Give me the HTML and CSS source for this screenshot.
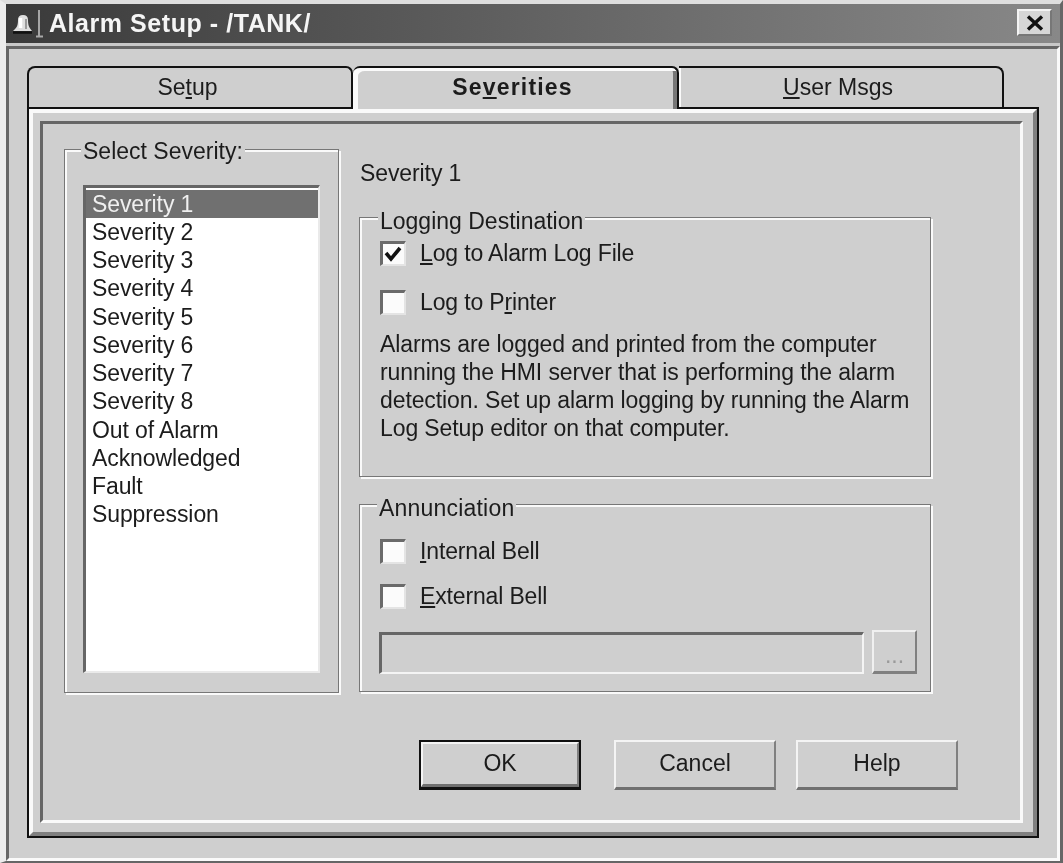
FILE: index.html
```html
<!DOCTYPE html>
<html lang="en">
<head>
<meta charset="utf-8">
<title>Alarm Setup - /TANK/</title>
<link rel="stylesheet" href="styles.css">
</head>
<body>
<div class="window">
  <header class="titlebar">
    <svg class="bell" viewBox="0 0 36 32" width="36" height="32" aria-hidden="true">
      <path d="M2 24 C5 21 7 20 7 13 Q7 8 12 8 Q17 8 17 13 C17 20 19 21 21 24 Z" fill="#dedede"/>
      <path d="M9.500 11 V21" stroke="#ffffff" stroke-width="3.500"/>
      <path d="M15 12 V22" stroke="#9a9a9a" stroke-width="2"/>
      <path d="M2 25.500 H21" stroke="#111" stroke-width="2.500"/>
      <path d="M28 3 V29" stroke="#c8c8c8" stroke-width="1.500"/>
      <path d="M25 29.500 H32" stroke="#a8a8a8" stroke-width="2"/>
    </svg>
    <span class="title-text">Alarm Setup - /TANK/</span>
    <span class="close-btn">
      <svg viewBox="0 0 18 16" width="18" height="16" aria-hidden="true">
        <path d="M2 1.500 L16 14.500 M16 1.500 L2 14.500" stroke="#111" stroke-width="3.400" fill="none"/>
      </svg>
    </span>
  </header>
  <div class="client">
    <nav class="tabs">
      <div class="tab tab-first">Se<u>t</u>up</div>
      <div class="tab tab-active">Se<u>v</u>erities</div>
      <div class="tab tab-last"><u>U</u>ser Msgs</div>
    </nav>
    <div class="page">
      <div class="page-bevel">
        <div class="frame">
          <div class="columns">
            <section class="group group-select">
              <div class="legend legend-high">Select Severity:</div>
              <ul class="listbox">
                <li class="selected">Severity 1</li>
                <li>Severity 2</li>
                <li>Severity 3</li>
                <li>Severity 4</li>
                <li>Severity 5</li>
                <li>Severity 6</li>
                <li>Severity 7</li>
                <li>Severity 8</li>
                <li>Out of Alarm</li>
                <li>Acknowledged</li>
                <li>Fault</li>
                <li>Suppression</li>
              </ul>
            </section>
            <div class="detail">
              <div class="detail-heading">Severity 1</div>
              <section class="group group-logging">
                <div class="legend">Logging Destination</div>
                <div class="check-row row-log-file">
                  <span class="checkbox">
                    <svg viewBox="0 0 21 20" width="21" height="20" aria-hidden="true">
                      <path d="M3 9 L8 15 L17 4" stroke="#111" stroke-width="3.600" fill="none"/>
                    </svg>
                  </span>
                  <span><u>L</u>og to Alarm Log File</span>
                </div>
                <div class="check-row row-printer">
                  <span class="checkbox"></span>
                  <span>Log to P<u>r</u>inter</span>
                </div>
                <p class="note">Alarms are logged and printed from the computer running the HMI server that is performing the alarm detection. Set up alarm logging by running the Alarm Log Setup editor on that computer.</p>
              </section>
              <section class="group group-annunciation">
                <div class="legend legend-annunciation">Annunciation</div>
                <div class="check-row row-internal">
                  <span class="checkbox"></span>
                  <span><u>I</u>nternal Bell</span>
                </div>
                <div class="check-row row-external">
                  <span class="checkbox"></span>
                  <span><u>E</u>xternal Bell</span>
                </div>
                <div class="file-row">
                  <div class="file-field"></div>
                  <div class="browse-btn">...</div>
                </div>
              </section>
            </div>
          </div>
          <div class="actions">
            <div class="btn btn-default"><span class="btn-face">OK</span></div>
            <div class="btn btn-cancel"><span class="btn-face">Cancel</span></div>
            <div class="btn btn-help"><span class="btn-face">Help</span></div>
          </div>
        </div>
      </div>
    </div>
  </div>
</div>
</body>
</html>
```

FILE: styles.css
```css
* { box-sizing: border-box; }
html, body { margin: 0; padding: 0; background: #cfcfcf; }
body {
  width: 1063px;
  height: 863px;
  overflow: hidden;
  font-family: "Liberation Sans", Arial, sans-serif;
  font-size: 23px;
  color: #1c1c1c;
}
u { text-underline-offset: 2px; text-decoration-thickness: 2px; }

.window {
  width: 1063px;
  height: 863px;
  display: flex;
  flex-direction: column;
  background: #cfcfcf;
  border-top: 4px solid #dedede;
  border-left: 6px solid #ececec;
  border-right: 3px solid #666;
  border-bottom: 2px solid #666;
  filter: blur(0.45px);
}

.titlebar {
  height: 42px;
  flex: none;
  display: flex;
  align-items: center;
  padding-left: 5px;
  padding-right: 2px;
  color: #f5f5f5;
  background: linear-gradient(to right, #3a3a3a 0%, #5a5a5a 40%, #727272 70%, #888 100%);
  border-bottom: 3px solid #c8c8c8;
}
.bell { flex: none; margin-top: -1px; }
.title-text {
  margin-left: 2px;
  font-weight: 700;
  font-size: 25px;
  letter-spacing: 0.55px;
}
.close-btn {
  margin-left: auto;
  width: 35px;
  height: 27px;
  margin-top: -2px;
  margin-right: 6px;
  display: flex;
  align-items: center;
  justify-content: center;
  background: #d6d6d6;
  border-top: 2px solid #f4f4f4;
  border-left: 2px solid #f4f4f4;
  border-right: 2px solid #777;
  border-bottom: 2px solid #777;
}

.client {
  flex: 1;
  min-height: 0;
  display: flex;
  flex-direction: column;
  border-top: 3px solid #666;
  border-left: 3px solid #666;
  border-right: 3px solid #fafafa;
  border-bottom: 3px solid #fafafa;
  padding: 17px 18px 20px 18px;
}

.tabs {
  display: flex;
  align-items: flex-start;
  flex: none;
  height: 41px;
}
.tab {
  height: 41px;
  display: flex;
  align-items: center;
  justify-content: center;
  border-top: 2px solid #111;
}
.tab-first {
  width: 326px;
  padding-right: 5px;
  border-left: 2px solid #111;
  border-right: 2px solid #111;
  border-radius: 8px 7px 0 0;
}
.tab-active {
  position: relative;
  z-index: 2;
  width: 326px;
  height: 43px;
  padding: 0 5px 2px 0;
  font-weight: 700;
  letter-spacing: 1.2px;
  border-right: 2px solid #111;
  border-radius: 7px 7px 0 0;
  background: #cfcfcf;
  box-shadow: inset 5px 3px 0 #fafafa, inset -4px 0 0 #777;
}
.tab-last {
  width: 325px;
  padding-right: 5px;
  border-right: 2px solid #111;
  border-radius: 0 8px 0 0;
  box-shadow: inset 2px 0 0 #fafafa;
}

.page {
  flex: 1;
  min-height: 0;
  width: 1012px;
  border: 2px solid #111;
}
.page-bevel {
  height: 100%;
  border-top: 4px solid #fafafa;
  border-left: 4px solid #fafafa;
  border-right: 4px solid #808080;
  border-bottom: 4px solid #808080;
  padding: 8px 10px 9px 7px;
}
.frame {
  height: 100%;
  border-top: 3px solid #666;
  border-left: 3px solid #666;
  border-right: 3px solid #fafafa;
  border-bottom: 3px solid #fafafa;
  padding: 25px 0 0 21px;
}

.columns { display: flex; gap: 20px; align-items: flex-start; }

.group {
  border: 1px solid #777;
  padding: 1px;
  box-shadow: 2px 2px 0 #fafafa, inset 2px 2px 0 #fafafa;
}
.group-select { width: 275px; height: 544px; flex: none; }
.legend {
  width: fit-content;
  height: 28px;
  line-height: 28px;
  margin: -12px 0 0 17px;
  padding: 0 2px;
  background: #cfcfcf;
}
.legend-high { margin-top: -14px; margin-left: 15px; }
.legend-annunciation { margin-left: 16px; letter-spacing: 0.2px; }

.listbox {
  list-style: none;
  margin: 20px 0 0 17px;
  padding: 1.5px 0 0;
  width: 237px;
  height: 488px;
  background: #fff;
  border-top: 3px solid #666;
  border-left: 3px solid #666;
  border-right: 2px solid #eaeaea;
  border-bottom: 2px solid #eaeaea;
  letter-spacing: -0.1px;
}
.listbox li {
  height: 28.27px;
  line-height: 28.27px;
  padding-left: 6px;
}
.listbox .selected { background: #707070; color: #f0f0f0; }

.detail { width: 572px; flex: none; display: flex; flex-direction: column; }
.detail-heading { height: 28px; line-height: 28px; margin: 10px 0 0 1px; letter-spacing: -0.1px; }

.group-logging { height: 260px; margin-top: 30px; }
.group-annunciation { height: 188px; margin-top: 27px; }

.check-row {
  display: flex;
  align-items: center;
  gap: 14px;
  height: 26px;
  padding-left: 19px;
  letter-spacing: -0.15px;
}
.row-log-file { margin-top: 5px; }
.row-printer { margin-top: 23px; }
.row-internal { margin-top: 16px; }
.row-external { margin-top: 19px; }
.checkbox {
  width: 26px;
  height: 25px;
  flex: none;
  display: flex;
  align-items: center;
  justify-content: center;
  background: #fbfbfb;
  border-top: 3px solid #6a6a6a;
  border-left: 3px solid #6a6a6a;
  border-right: 2px solid #e4e4e4;
  border-bottom: 2px solid #e4e4e4;
}

.note {
  margin: 14.5px 0 0 19px;
  width: 548px;
  line-height: 28.3px;
  letter-spacing: -0.1px;
}

.file-row {
  display: flex;
  align-items: flex-end;
  gap: 8px;
  margin-top: 21px;
  padding-left: 18px;
}
.file-field {
  width: 485px;
  height: 42px;
  border-top: 3px solid #666;
  border-left: 3px solid #666;
  border-right: 2px solid #f4f4f4;
  border-bottom: 2px solid #f4f4f4;
}
.browse-btn {
  width: 45px;
  height: 44px;
  display: flex;
  align-items: flex-end;
  justify-content: center;
  color: #9a9a9a;
  line-height: 22px;
  padding-bottom: 5px;
  border-top: 2px solid #f0f0f0;
  border-left: 2px solid #f0f0f0;
  border-right: 2px solid #808080;
  border-bottom: 3px solid #808080;
}

.actions {
  display: flex;
  margin-top: 47px;
  margin-left: 355px;
}
.btn {
  width: 162px;
  height: 50px;
  display: flex;
}
.btn-face {
  flex: 1;
  display: flex;
  align-items: center;
  justify-content: center;
  padding-bottom: 3px;
  border-top: 2px solid #f4f4f4;
  border-left: 2px solid #f4f4f4;
  border-right: 2px solid #808080;
  border-bottom: 3px solid #707070;
}
.btn-default { border: 2px solid #111; border-bottom-width: 3px; }
.btn-default .btn-face { padding-bottom: 1px; }
.btn-cancel { margin-left: 33px; }
.btn-help { margin-left: 20px; }
```
